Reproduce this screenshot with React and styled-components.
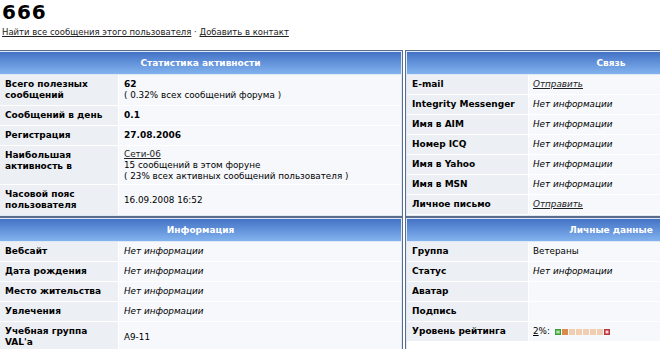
import React from 'react';
import styled, { createGlobalStyle } from 'styled-components';

const Global = createGlobalStyle`
  html, body { margin: 0; padding: 0; background: #fff; overflow: hidden; }
  body { font-family: "DejaVu Sans", Verdana, sans-serif; font-size: 9px; color: #000; }
`;

const Page = styled.div`
  width: 820px;
  padding-left: 2px;
`;

const Title = styled.h1`
  margin: 0;
  font-size: 20px;
  line-height: 24px;
  font-weight: bold;
  letter-spacing: 1px;
`;

const Links = styled.div`
  margin-top: 2px;
  line-height: 12px;
  font-size: 8.5px;
  color: #222;
`;

const Link = styled.a`
  color: #222;
  text-decoration: underline;
  font-style: ${p => (p.$italic ? 'italic' : 'normal')};
`;

const Panels = styled.div`
  display: grid;
  grid-template-columns: 405px 412px;
  column-gap: 2px;
  margin: 12px 0 0 -4px;
`;

const Panel = styled.section`
  border: 1px solid #5b6d8c;
  padding: 1px;
  background: #dfe8f5;
  display: flex;
  flex-direction: column;
  gap: 1px;
  min-width: 0;
`;

const Header = styled.div`
  height: 22px;
  line-height: 22px;
  background: linear-gradient(#4472c6, #82b3ee);
  color: #fff;
  font-weight: bold;
  text-align: center;
`;

const Rows = styled.div`
  flex: 1;
  display: grid;
  grid-template-columns: ${p => p.$label}px 1fr;
  gap: 1px;
  align-content: start;
  background: #fff;
`;

const Label = styled.div`
  background: #eceff3;
  padding: 4px 5px;
  line-height: 11px;
  font-weight: bold;
  display: flex;
  align-items: ${p => (p.$top ? 'flex-start' : 'center')};
`;

const Value = styled.div`
  background: #f6f8fb;
  padding: ${p => (p.$tight ? '3px 5px 2px' : `4px ${p.$pad || 5}px`)};
  line-height: 11px;
  font-size: 8.8px;
  display: flex;
  align-items: center;
`;

const Strong = styled.b`
  font-weight: bold;
  font-size: 9px;
`;

const Muted = styled.i`
  font-style: italic;
`;

const Rating = styled.span`
  display: inline-flex;
  align-items: center;
  gap: 5px;
`;

const Abbr = styled.span`
  text-decoration: underline;
`;

const Boxes = styled.span`
  display: inline-flex;
  gap: 1px;
  align-items: center;
`;

const Box = styled.span`
  display: block;
  width: 6px;
  height: 6px;
  background: ${p => p.$c};
`;

function SignBox({ color, edge, plus }) {
  return (
    <svg width="6" height="6" viewBox="0 0 6 6" style={{ display: 'block' }}>
      <rect x="0.5" y="0.5" width="5" height="5" fill={color} stroke={edge} strokeWidth="1" />
      <rect x="1.5" y="2.5" width="3" height="1" fill="#fff" />
      {plus && <rect x="2.5" y="1.5" width="1" height="3" fill="#fff" />}
    </svg>
  );
}

const NoInfo = () => <Muted>Нет информации</Muted>;

function Row({ label, children, top, tight, pad }) {
  return (
    <>
      <Label $top={top}><span>{label}</span></Label>
      <Value $tight={tight} $pad={pad}><span>{children}</span></Value>
    </>
  );
}

export default function App() {
  return (
    <Page>
      <Global />
      <Title>666</Title>
      <Links>
        <Link href="#">Найти все сообщения этого пользователя</Link> · <Link href="#">Добавить в контакт</Link>
      </Links>
      <Panels>
        <Panel>
          <Header>Статистика активности</Header>
          <Rows $label={118}>
            <Row label={<>Всего полезных<br />сообщений</>}>
              <Strong>62</Strong><br />( 0.32% всех сообщений форума )
            </Row>
            <Row label="Сообщений в день"><Strong>0.1</Strong></Row>
            <Row label="Регистрация"><Strong>27.08.2006</Strong></Row>
            <Row label={<>Наибольшая<br />активность в</>} top tight>
              <Link href="#">Сети-06</Link><br />15 сообщений в этом форуне<br />( 23% всех активных сообщений пользователя )
            </Row>
            <Row label={<>Часовой пояс<br />пользователя</>}>16.09.2008 16:52</Row>
          </Rows>
        </Panel>
        <Panel>
          <Header>Связь</Header>
          <Rows $label={121}>
            <Row label="E-mail" pad={4}><Link href="#" $italic>Отправить</Link></Row>
            <Row label="Integrity Messenger" pad={4}><NoInfo /></Row>
            <Row label="Имя в AIM" pad={4}><NoInfo /></Row>
            <Row label="Номер ICQ" pad={4}><NoInfo /></Row>
            <Row label="Имя в Yahoo" pad={4}><NoInfo /></Row>
            <Row label="Имя в MSN" pad={4}><NoInfo /></Row>
            <Row label="Личное письмо" pad={4}><Link href="#" $italic>Отправить</Link></Row>
          </Rows>
        </Panel>
        <Panel>
          <Header>Информация</Header>
          <Rows $label={118}>
            <Row label="Вебсайт"><NoInfo /></Row>
            <Row label="Дата рождения"><NoInfo /></Row>
            <Row label="Место жительства"><NoInfo /></Row>
            <Row label="Увлечения"><NoInfo /></Row>
            <Row label={<>Учебная группа<br />VAL'a</>}>А9-11</Row>
          </Rows>
        </Panel>
        <Panel>
          <Header>Личные данные</Header>
          <Rows $label={121}>
            <Row label="Группа" pad={4}>Ветераны</Row>
            <Row label="Статус" pad={4}><NoInfo /></Row>
            <Row label="Аватар" pad={4}>&nbsp;</Row>
            <Row label="Подпись" pad={4}>&nbsp;</Row>
            <Row label="Уровень рейтинга" pad={4}>
              <Rating>
                <span><Abbr>2</Abbr>%:</span>
                <Boxes>
                  <SignBox color="#6cc35e" edge="#3f9a3a" />
                  <Box $c="#d98a4c" />
                  <Box $c="#f1cdb2" />
                  <Box $c="#f1cdb2" />
                  <Box $c="#f1cdb2" />
                  <Box $c="#f1cdb2" />
                  <Box $c="#f1cdb2" />
                  <SignBox color="#d9535a" edge="#b23a42" plus />
                </Boxes>
              </Rating>
            </Row>
          </Rows>
        </Panel>
      </Panels>
    </Page>
  );
}
